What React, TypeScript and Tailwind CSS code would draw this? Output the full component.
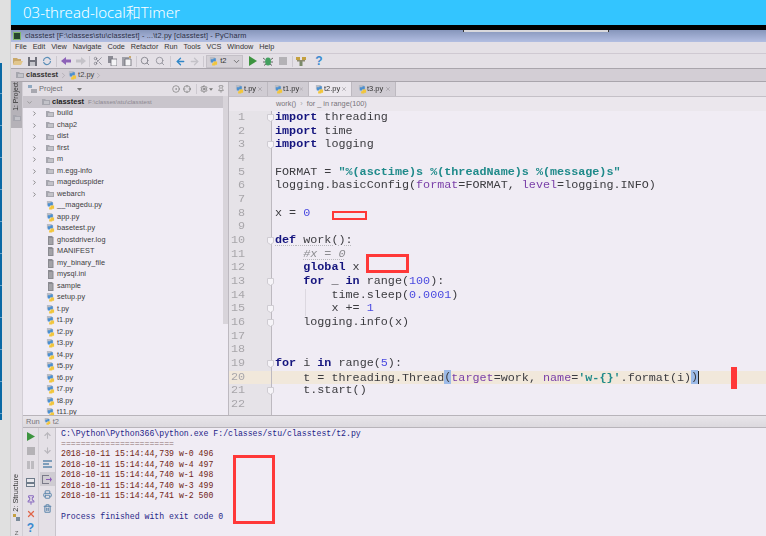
import React from 'react';
import { ChevronRight, ChevronDown, X, Scissors, Search, ArrowLeft, ArrowRight, ArrowUp, ArrowDown, Trash2, Printer, Settings, Pin, Crosshair, CircleDot } from 'lucide-react';

const mono = "font-['Liberation_Mono',monospace]";
const ui = "font-['Liberation_Sans',sans-serif]";

const treeItems: [string, 'dir' | 'py' | 'file'][] = [
    ['build', 'dir'], ['chap2', 'dir'], ['dist', 'dir'], ['first', 'dir'], ['m', 'dir'], ['m.egg-info', 'dir'],
    ['mageduspider', 'dir'], ['webarch', 'dir'], ['__magedu.py', 'py'], ['app.py', 'py'], ['basetest.py', 'py'],
    ['ghostdriver.log', 'file'], ['MANIFEST', 'file'], ['my_binary_file', 'file'], ['mysql.ini', 'file'], ['sample', 'file'],
    ['setup.py', 'py'], ['t.py', 'py'], ['t1.py', 'py'], ['t2.py', 'py'], ['t3.py', 'py'], ['t4.py', 'py'], ['t5.py', 'py'],
    ['t6.py', 'py'], ['t7.py', 'py'], ['t8.py', 'py'], ['t11.py', 'py'],
];

const menus = ['File', 'Edit', 'View', 'Navigate', 'Code', 'Refactor', 'Run', 'Tools', 'VCS', 'Window', 'Help'];

const tabs = [
    { name: 't.py', cls: 'w-[39px] bg-[#d0ccd3]' },
    { name: 't1.py', cls: 'w-[41px] bg-[#d0ccd3]' },
    { name: 't2.py', cls: 'w-[43px] bg-[#ece8ee]' },
    { name: 't3.py', cls: 'w-[44px] bg-[#d0ccd3]' },
];

function PyIcon({ size = 9 }: { size?: number }) {
    return (
        <svg width={size} height={size} viewBox="0 0 10 10" className="shrink-0">
            <path d="M1 0h5l2 2v3H1z" fill="#b9bcc4" />
            <path d="M2 2.500h3V1.500h2.500V5H4.500v1H2z" fill="#4b8fd0" />
            <path d="M5 5h4v3.500H7v1H3.500V7H5z" fill="#f2c63c" />
        </svg>
    );
}

function FolderIcon() {
    return (
        <svg width="8" height="8" viewBox="0 0 8 8" className="shrink-0">
            <path d="M0 1h3l1 1h4v5H0z" fill="#a6a6ae" />
            <path d="M2 3h5v3H2z" fill="#c2c2c8" />
        </svg>
    );
}

function FileIcon() {
    return (
        <svg width="9" height="9" viewBox="0 0 9 9" className="shrink-0">
            <path d="M2 0h4l1.500 1.500V9H2z" fill="#8a8a90" />
            <path d="M3 3h3.500M3 5h3.500M3 7h3.500" stroke="#d0d0d4" strokeWidth="0.7" />
        </svg>
    );
}

function Sep({ className }: { className: string }) {
    return <div className={`w-px h-[11px] bg-[#cdc9d0] shrink-0 ${className}`} />;
}

function ToolBox({ children }: { children: React.ReactNode }) {
    return <div className="w-[14.6px] h-full flex items-center justify-center shrink-0">{children}</div>;
}

function Toolbar() {
    return (
        <div className="h-[15px] bg-[#e4e0e6] border-b border-[#a9a5ac] flex items-center shrink-0">
            <ToolBox>
                <svg width="10" height="9" viewBox="0 0 10 9"><path d="M0 1h4l1 1h3v2H2L0 8z" fill="#c9a86a" /><path d="M2 4h8L8 8H0z" fill="#e2c68c" /></svg>
            </ToolBox>
            <ToolBox>
                <svg width="9" height="9" viewBox="0 0 9 9"><path d="M0 0h9v9H0z" fill="#70707a" /><path d="M2 0h5v3H2z" fill="#e4e0e6" /><path d="M2 5h5v4H2z" fill="#c4c4ca" /></svg>
            </ToolBox>
            <ToolBox>
                <svg width="10" height="10" viewBox="0 0 10 10" fill="none" stroke="#5c8fb8" strokeWidth="1.200"><path d="M1.500 5a3.500 3.500 0 0 1 6-2.500L8.500 4M8.500 5a3.500 3.500 0 0 1-6 2.500L1.500 6" /></svg>
            </ToolBox>
            <Sep className="ml-[1px] mr-[2px]" />
            <ToolBox>
                <svg width="10" height="8" viewBox="0 0 10 8"><path d="M0 4l5-4v2.500h5v3H5V8z" fill="#8d62b8" /></svg>
            </ToolBox>
            <ToolBox>
                <svg width="10" height="8" viewBox="0 0 10 8"><path d="M10 4L5 0v2.500H0v3h5V8z" fill="#c4c2c8" /></svg>
            </ToolBox>
            <Sep className="mx-[1px]" />
            <ToolBox><Scissors size={10} color="#6f6f78" strokeWidth={1.500} /></ToolBox>
            <ToolBox>
                <svg width="9" height="10" viewBox="0 0 9 10"><path d="M0 0h5v7H0z" fill="#8b8b94" /><path d="M3 3h6v7H3z" fill="#f4f4f6" stroke="#70707a" strokeWidth="0.8" /></svg>
            </ToolBox>
            <ToolBox>
                <svg width="10" height="10" viewBox="0 0 10 10"><path d="M0 1h7v9H0z" fill="#a0a0a8" /><path d="M3 3h6v7H3z" fill="#f4f4f6" stroke="#6a6a72" strokeWidth="0.8" /><path d="M7 0h2v2H7z" fill="#c9a86a" /></svg>
            </ToolBox>
            <Sep className="mx-[1px]" />
            <ToolBox><Search size={10} color="#7d7d86" strokeWidth={2} /></ToolBox>
            <ToolBox><Search size={10} color="#8f8f98" strokeWidth={2} /></ToolBox>
            <Sep className="ml-[3px] mr-[2px]" />
            <ToolBox><ArrowLeft size={11} color="#2f86c8" strokeWidth={2.800} /></ToolBox>
            <ToolBox><ArrowRight size={11} color="#c4c2c8" strokeWidth={2.800} /></ToolBox>
            <Sep className="mx-[1px]" />
            <div className="ml-[1px] w-[37px] h-[13px] bg-[#d4d0d6] border border-[#c4c0c7] flex items-center pl-[2px] shrink-0">
                <PyIcon />
                <span className={`${ui} text-[7.500px] text-[#333] ml-[2px]`}>t2</span>
                <ChevronDown size={9} color="#555" className="ml-auto mr-[1px]" />
            </div>
            <div className="w-[3px] shrink-0" />
            <ToolBox>
                <svg width="8" height="10" viewBox="0 0 8 10"><path d="M0 0l8 5-8 5z" fill="#3d9440" /></svg>
            </ToolBox>
            <ToolBox>
                <svg width="10" height="10" viewBox="0 0 10 10"><ellipse cx="5" cy="5.500" rx="3" ry="4" fill="#44a060" /><path d="M0 2l2 1.500M10 2L8 3.500M0 6h2M10 6H8M1 9.500l2-1.500M9 9.500L7 8" stroke="#666" strokeWidth="1" /></svg>
            </ToolBox>
            <ToolBox><div className="w-[8px] h-[8px] bg-[#b4b2b6]" /></ToolBox>
            <Sep className="ml-[2px] mr-[1px]" />
            <ToolBox>
                <svg width="10" height="10" viewBox="0 0 10 10"><path d="M0 1h4v3H0zM6 1h4v3H6z" fill="#c4a040" /><path d="M3.500 5h3v5h-3z" fill="#7a8a6a" /><path d="M1 4h8v1.500H1z" fill="#8a8a70" /></svg>
            </ToolBox>
            <div className="w-[3px] shrink-0" />
            <ToolBox><span className={`${ui} text-[12px] font-bold text-[#3b8ad0]`}>?</span></ToolBox>
        </div>
    );
}

function TitleBar() {
    return (
        <div className="h-[12px] bg-linear-to-b from-[#8796bb] to-[#b2bee2] flex items-center shrink-0 relative">
            <div className="absolute left-[452px] top-0 w-[146px] h-[1.500px] bg-[#d8d8dc] border-x border-[#333]" />
            <div className="ml-[2px] w-[8px] h-[8px] bg-[#26462e] border border-[#7fb86a]" />
            <span className={`${ui} text-[7.300px] text-[#2b2f44] ml-[4px] tracking-[0.02em] whitespace-pre`}>classtest [F:\classes\stu\classtest] - ...\t2.py [classtest] - PyCharm</span>
        </div>
    );
}

function ProjectPanel() {
    return (
        <div className="w-[206px] flex flex-col shrink-0 border-r border-[#bdb9c0] bg-[#f0ecf4] relative">
            <div className="h-[14px] bg-[#e4e0e6] flex items-center pl-[5px] shrink-0">
                <svg width="9" height="8" viewBox="0 0 9 8"><path d="M0 0h4v3H0z" fill="#8fa8c0" /><path d="M3 4h6v4H3z" fill="#a8a8b0" /></svg>
                <span className={`${ui} text-[7.500px] text-[#6e6e72] ml-[2px]`}>Project</span>
                <svg width="5" height="3" viewBox="0 0 5 3" className="ml-[15px]"><path d="M0 0h5L2.500 3z" fill="#777" /></svg>
                <CircleDot size={8} color="#777" strokeWidth={2} className="ml-auto" />
                <Crosshair size={8} color="#777" strokeWidth={2} className="ml-[3px]" />
                <div className="w-px h-[10px] bg-[#cdc9d0] ml-[5px]" />
                <Settings size={8} color="#777" strokeWidth={2.500} className="ml-[3px]" />
                <svg width="4" height="3" viewBox="0 0 5 3" className="ml-[1px]"><path d="M0 0h5L2.500 3z" fill="#777" /></svg>
                <Pin size={8} color="#777" strokeWidth={2} className="ml-[4px] mr-[3px]" />
            </div>
            <div className="h-[12px] bg-[#c9c5cc] flex items-center shrink-0">
                <ChevronDown size={7} color="#888" strokeWidth={2.500} className="ml-[3px]" />
                <div className="ml-[9px]"><FolderIcon /></div>
                <span className={`${ui} text-[7.500px] font-bold text-[#222] ml-[2px]`}>classtest</span>
                <span className={`${ui} text-[6.200px] text-[#8c8890] ml-[4px] whitespace-pre`}>F:\classes\stu\classtest</span>
            </div>
            <div className="flex-1 overflow-hidden">
                {treeItems.map(([name, kind]) => (
                    <div key={name} className="h-[11.500px] flex items-center">
                        <div className="w-[23px] flex justify-end shrink-0 pr-[8px]">
                            {kind === 'dir' && <ChevronRight size={7} color="#666" strokeWidth={2.500} />}
                        </div>
                        <div className="w-[11px] flex items-center shrink-0">
                            {kind === 'dir' ? <FolderIcon /> : kind === 'py' ? <PyIcon /> : <FileIcon />}
                        </div>
                        <span className={`${ui} text-[7.300px] text-[#3c3c40] tracking-[0.01em] whitespace-pre`}>{name}</span>
                    </div>
                ))}
            </div>
            <div className="absolute right-0 top-[14px] w-[5px] h-[228px] bg-[#d8d4da]" />
        </div>
    );
}

const Kw = ({ children }: { children: React.ReactNode }) => <span className="font-bold text-[#14147e]">{children}</span>;
const Num = ({ children }: { children: React.ReactNode }) => <span className="text-[#4a4ae0]">{children}</span>;
const Str = ({ children }: { children: React.ReactNode }) => <span className="text-[#1f8a8a] font-bold">{children}</span>;
const Arg = ({ children }: { children: React.ReactNode }) => <span className="text-[#7a3fa8]">{children}</span>;
const Brace = ({ children }: { children: React.ReactNode }) => <span className="bg-[#9dbbe8]">{children}</span>;
const Weak = ({ children }: { children: React.ReactNode }) => <span className="underline decoration-dotted decoration-[#b8b8bc] underline-offset-2">{children}</span>;

const code: React.ReactNode[] = [
    <><Kw>import</Kw> threading</>,
    <><Kw>import</Kw> time</>,
    <><Kw>import</Kw> logging</>,
    '',
    <>FORMAT = <Str>{'"%(asctime)s %(threadName)s %(message)s"'}</Str></>,
    <>logging.basicConfig(<Arg>format</Arg>=FORMAT, <Arg>level</Arg>=logging.INFO)</>,
    '',
    <>x = <Num>0</Num></>,
    '',
    <Weak><Kw>def</Kw> work():</Weak>,
    <>{'    '}<span className="italic text-[#8c8c90]"><Weak>#x = 0</Weak></span></>,
    <>{'    '}<Kw>global</Kw> x</>,
    <>{'    '}<Kw>for</Kw> _ <Kw>in</Kw> range(<Num>100</Num>):</>,
    <>{'        '}time.sleep(<Num>0.0001</Num>)</>,
    <>{'        '}x += <Num>1</Num></>,
    <>{'    '}logging.info(x)</>,
    '',
    '',
    <><Kw>for</Kw> i <Kw>in</Kw> range(<Num>5</Num>):</>,
    <>{'    '}t = threading.Thread<Brace>(</Brace><Arg>target</Arg>=work, <Arg>name</Arg>=<Str>{"'w-{}'"}</Str>.format(i)<Brace>)</Brace><span className="inline-block w-px h-[13px] bg-[#222] align-middle" /></>,
    <>{'    '}t.start()</>,
    '',
    <>{'  '}<Kw>print</Kw>(threading.enumerate())</>,
];

const foldLines = [1, 3, 10, 13, 15, 16, 19, 21];

function Editor() {
    return (
        <div className="flex-1 min-w-0 flex flex-col bg-[#f0ecf4]">
            <div className="h-[15px] bg-[#e4e0e6] border-b border-[#c4c0c7] flex shrink-0">
                {tabs.map((tab) => (
                    <div key={tab.name} className={`flex items-center pl-[6px] border-r border-[#bdb9c0] shrink-0 ${tab.cls}`}>
                        <PyIcon />
                        <span className={`${ui} text-[7.500px] text-[#333]`}>{tab.name}</span>
                        <X size={6} color="#99959c" strokeWidth={2.500} className="ml-auto mr-[4px]" />
                    </div>
                ))}
            </div>
            <div className={`h-[14px] bg-[#ebe7ed] flex items-center pl-[47px] shrink-0 ${ui} text-[7.300px] text-[#77747a] whitespace-pre`}>
                work()<span className="mx-[4px] text-[#aaa]">›</span>for _ in range(100)
            </div>
            <div className={`flex-1 overflow-hidden ${mono} text-[11.760px] leading-[13.680px] text-[#3c3c40]`}>
                {code.map((line, i) => (
                    <div key={i} className={`h-[13.680px] flex relative ${i === 19 ? 'bg-[#f1e8db]' : ''}`}>
                        <div className={`w-[43px] shrink-0 text-right pr-[26px] text-[#a8a6aa] border-r border-[#bdb9c0] relative ${i === 19 ? '' : 'bg-[#e6e3e8]'} ${i === 22 ? 'pt-[2px]' : ''}`}>
                            {i + 1}
                            {foldLines.includes(i + 1) && (
                                <svg width="7" height="8" viewBox="0 0 7 8" className="absolute right-[-3px] top-[3px]">
                                    <path d="M0.500 0.500h6v5l-3 2-3-2z" fill="#f6f4f8" stroke="#cfccd2" />
                                </svg>
                            )}
                        </div>
                        <div className={`pl-[3px] whitespace-pre ${i === 22 ? 'pt-[2px]' : ''}`}>{line}</div>
                        {(i === 13 || i === 14) && <div className="absolute left-[76px] top-0 bottom-0 w-px bg-[#dcd8e0]" />}
                    </div>
                ))}
            </div>
        </div>
    );
}

function ToolCol({ children, className }: { children: React.ReactNode; className: string }) {
    return <div className={`shrink-0 flex flex-col items-center ${className}`}>{children}</div>;
}

function RunPanel() {
    const logs = [
        '2018-10-11 15:14:44,739 w-0 496',
        '2018-10-11 15:14:44,740 w-4 497',
        '2018-10-11 15:14:44,740 w-1 498',
        '2018-10-11 15:14:44,740 w-3 499',
        '2018-10-11 15:14:44,741 w-2 500',
    ];
    return (
        <div className="flex-1 flex flex-col min-h-0 bg-[#f0ecf4]">
            <div className="h-[13px] bg-linear-to-b from-[#e8e5ea] to-[#dcd9de] border-y border-[#b8b4ba] flex items-center pl-[3px] shrink-0">
                <span className={`${ui} text-[7.500px] text-[#77747a]`}>Run</span>
                <div className="ml-[4px]"><PyIcon size={7} /></div>
                <span className={`${ui} text-[7.500px] text-[#77747a] ml-[2px]`}>t2</span>
            </div>
            <div className="flex-1 flex min-h-0">
                <ToolCol className="w-[16px] bg-[#e4e0e6] border-r border-[#d2ced5] pt-[4px] gap-[5px]">
                    <svg width="8" height="9" viewBox="0 0 8 9"><path d="M0 0l8 4.500-8 4.500z" fill="#3d9440" /></svg>
                    <div className="w-[8px] h-[8px] bg-[#b4b2b6] mt-[1px]" />
                    <div className="flex gap-[1px] mt-[1px]"><div className="w-[3px] h-[8px] bg-[#bdbbc0]" /><div className="w-[3px] h-[8px] bg-[#bdbbc0]" /></div>
                    <svg width="9" height="9" viewBox="0 0 9 9" className="mt-[4px]"><path d="M0 0h9v9H0z" fill="#6e7b8a" /><path d="M1 1h7v3H1zM1 6h7v2H1z" fill="#e8e8ec" /></svg>
                    <Pin size={10} color="#8a6cc0" strokeWidth={2.500} className="mt-[3px]" />
                    <X size={10} color="#e0664a" strokeWidth={3} className="mt-[-1px]" />
                    <span className={`${ui} text-[12px] font-bold text-[#3b8ad0] leading-[12px] mt-[-2px]`}>?</span>
                </ToolCol>
                <ToolCol className="w-[17px] bg-[#e4e0e6] border-r border-[#c8c4cb] pt-[3px] gap-[4px]">
                    <ArrowUp size={9} color="#b8b6bc" strokeWidth={3} />
                    <ArrowDown size={9} color="#b8b6bc" strokeWidth={3} className="mt-[2px]" />
                    <svg width="9" height="8" viewBox="0 0 9 8" className="mt-[1px]"><path d="M0 1h9M0 4h6M0 7h9" stroke="#5c86ac" strokeWidth="1.300" /></svg>
                    <div className="w-[15px] h-[14px] bg-[#cfccd2] flex items-center justify-center">
                        <svg width="10" height="9" viewBox="0 0 10 9"><path d="M0 0h7v1H1v7h6v1H0z" fill="#7a7a88" /><path d="M4 4h4V2l2 2.500L8 7V5H4z" fill="#8a5ab8" /></svg>
                    </div>
                    <Printer size={9} color="#5c86ac" strokeWidth={2.500} />
                    <Trash2 size={9} color="#5c86ac" strokeWidth={2.800} className="mt-[1px]" />
                </ToolCol>
                <div className={`pl-[5px] pt-[0.500px] ${mono} text-[8.200px] leading-[10.400px] whitespace-pre`}>
                    <div className="text-[#1c1c86]">C:\Python\Python366\python.exe F:/classes/stu/classtest/t2.py</div>
                    <div className="text-[#8a6c6c]">=======================</div>
                    {logs.map((l) => (
                        <div key={l} className="text-[#701f14]">{l}</div>
                    ))}
                    <div className="h-[10.400px]" />
                    <div className="text-[#282888]">Process finished with exit code 0</div>
                </div>
            </div>
        </div>
    );
}

export default function App() {
    return (
        <div className="w-[766px] h-[536px] overflow-hidden flex relative bg-[#dcdcdc]">
            {/* desktop strip left of the window, only a sliver of it is blue */}
            <div className="w-[11px] shrink-0 bg-[#e0e0e0] border-r border-[#cfcfcf] flex flex-col">
                <div className="h-[63px] shrink-0" />
                <div className="h-[357px] w-[2px] bg-[repeating-linear-gradient(180deg,#0a6aa5_0,#0a6aa5_30px,#6aa6cc_30px,#6aa6cc_31px,#0a6aa5_31px,#0a6aa5_32px)]" />
            </div>

            <div className="flex-1 min-w-0 flex flex-col">
                <div className="h-[25px] bg-[#33c5ff] pl-[12px] flex items-center shrink-0">
                    <span className="font-['Noto_Sans','Noto_Sans_CJK_SC',sans-serif] font-light text-[15px] text-white">03-thread-local和Timer</span>
                </div>
                <div className="h-[5px] bg-black shrink-0" />

                <div className="flex-1 min-h-0 flex flex-col blur-[0.3px]">
                    <TitleBar />
                    <div className={`h-[12px] bg-[#e4e0e6] border-b border-[#cfc9d2] flex items-center pl-[4px] gap-[5.900px] shrink-0 ${ui} text-[7.300px] text-[#333]`}>
                        {menus.map((m) => <span key={m}>{m}</span>)}
                    </div>
                    <Toolbar />
                    <div className="h-[13px] bg-[#d3ced5] border-b border-[#a9a5ac] flex items-center pl-[5px] shrink-0">
                        <FolderIcon />
                        <span className={`${ui} text-[7.500px] font-bold text-[#333] ml-[2px]`}>classtest</span>
                        <ChevronRight size={9} color="#a09ca4" strokeWidth={1.500} className="ml-[1px]" />
                        <PyIcon />
                        <span className={`${ui} text-[7.500px] text-[#444] ml-[1px]`}>t2.py</span>
                        <ChevronRight size={9} color="#a09ca4" strokeWidth={1.500} />
                    </div>

                    <div className="flex-1 min-h-0 flex">
                        <div className="w-[12px] shrink-0 bg-[#e4e0e6] border-r border-[#d2ced5] flex flex-col items-center">
                            <div className="h-[46px] w-full bg-[#b5b2b8] flex flex-col-reverse items-center justify-end gap-[3px] pb-[5px]">
                                <FolderIcon />
                                <span className={`${ui} text-[6.800px] text-[#333] [writing-mode:vertical-rl] rotate-180 whitespace-pre`}>1: Project</span>
                            </div>
                            <div className="mt-auto flex flex-col items-center">
                                <span className={`${ui} text-[7.300px] text-[#333] [writing-mode:vertical-rl] rotate-180 whitespace-pre`}>2: Structure</span>
                                <svg width="7" height="7" viewBox="0 0 7 7" className="mt-[2px]"><path d="M0 0h3v3H0z" fill="#c4a040" /><path d="M3 3h4v4H3z" fill="#7a8a9a" /></svg>
                                <span className={`${ui} text-[6px] text-[#666] leading-[6px] mt-[9px]`}>Z</span>
                            </div>
                        </div>
                        <div className="flex-1 min-w-0 flex flex-col">
                            <div className="h-[333px] flex shrink-0">
                                <ProjectPanel />
                                <Editor />
                            </div>
                            <RunPanel />
                        </div>
                    </div>
                </div>
            </div>

            {/* red annotation boxes drawn over the screenshot */}
            <div className="absolute left-[332px] top-[211px] w-[35px] h-[9px] border-[2.500px] border-[#ff3838]" />
            <div className="absolute left-[366px] top-[254px] w-[43px] h-[19px] border-[3px] border-[#ff3838]" />
            <div className="absolute left-[233px] top-[455px] w-[42px] h-[69px] border-[3px] border-[#ff3838]" />
            <div className="absolute left-[731px] top-[367px] w-[6px] h-[22px] bg-[#ff3838]" />
        </div>
    );
}
